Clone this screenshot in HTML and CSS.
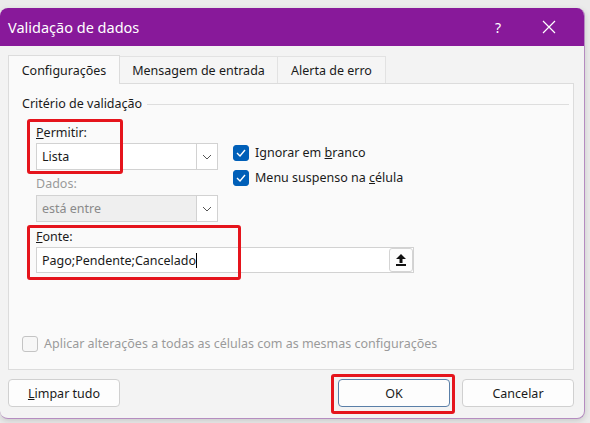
FILE: index.html
```html
<!DOCTYPE html>
<html lang="pt">
<head>
  <meta charset="UTF-8">
  <title>Validação de dados</title>
  <link rel="stylesheet" href="styles.css">
</head>
<body>
  <div class="window">
    <div class="titlebar">
      <span class="title">Validação de dados</span>
      <span class="help">?</span>
      <span class="close">
        <svg width="14" height="14" viewBox="0 0 14 14"><path d="M1 1 L13 13 M13 1 L1 13" stroke="#fff" stroke-width="1.2" fill="none"/></svg>
      </span>
    </div>

    <div class="body">
      <div class="tabs">
        <div class="tab active">Configurações</div>
        <div class="tab">Mensagem de entrada</div>
        <div class="tab">Alerta de erro</div>
      </div>

      <div class="panel">
        <div class="group-title"><span>Critério de validação</span></div>

        <div class="form">
          <div class="row">
            <div class="col-left">
              <div class="field-label"><u>P</u>ermitir:</div>
              <div class="select">
                <span class="value">Lista</span>
                <span class="drop"><svg width="10" height="6" viewBox="0 0 10 6"><path d="M1 1 L5 5 L9 1" stroke="#555" stroke-width="1" fill="none"/></svg></span>
              </div>
              <div class="field-label disabled">Dados:</div>
              <div class="select disabled">
                <span class="value">está entre</span>
                <span class="drop"><svg width="10" height="6" viewBox="0 0 10 6"><path d="M1 1 L5 5 L9 1" stroke="#555" stroke-width="1" fill="none"/></svg></span>
              </div>
            </div>
            <div class="col-checks">
              <div class="check-row">
                <span class="checkbox checked"><svg width="10" height="8" viewBox="0 0 10 8"><path d="M1 4 L4 7 L9 1" stroke="#fff" stroke-width="1.4" fill="none"/></svg></span>
                <span>Ignorar em <u>b</u>ranco</span>
              </div>
              <div class="check-row">
                <span class="checkbox checked"><svg width="10" height="8" viewBox="0 0 10 8"><path d="M1 4 L4 7 L9 1" stroke="#fff" stroke-width="1.4" fill="none"/></svg></span>
                <span>Menu suspenso na <u>c</u>élula</span>
              </div>
            </div>
          </div>

          <div class="field-label"><u>F</u>onte:</div>
          <div class="input">
            <span class="value">Pago;Pendente;Cancelado<span class="caret"></span></span>
            <span class="upload"><svg width="10" height="12" viewBox="0 0 10 12"><path d="M5 0 L10 5 L6.5 5 L6.5 9 L3.5 9 L3.5 5 L0 5 Z" fill="#111"/><rect x="0" y="10" width="10" height="2" fill="#111"/></svg></span>
          </div>
        </div>

        <div class="apply">
          <span class="checkbox"></span>
          <span>Aplicar alterações a todas as células com as mesmas configurações</span>
        </div>
      </div>

      <div class="footer">
        <div class="btn"><u>L</u>impar tudo</div>
        <div class="btn-group">
          <div class="btn primary">OK</div>
          <div class="btn">Cancelar</div>
        </div>
      </div>
    </div>

    <div class="mark mark-permitir"></div>
    <div class="mark mark-fonte"></div>
    <div class="mark mark-ok"></div>
  </div>
</body>
</html>
```

FILE: styles.css
```css
body {
  margin: 0;
  background: #ebebeb;
  font-family: "Noto Sans", "Open Sans", sans-serif;
  font-size: 12.5px;
  color: #1a1a1a;
  width: 590px;
  height: 423px;
  overflow: hidden;
}

.window {
  position: relative;
  margin-top: 8px;
  width: 584px;
  height: 410px;
  border: 1px solid #b58cc0;
  border-left: none;
  border-top: none;
  border-radius: 8px;
  overflow: hidden;
  background: #f3f3f3;
  box-shadow: 0 2px 6px rgba(0, 0, 0, 0.15);
}

.titlebar {
  height: 38px;
  background: #88199a;
  color: #fff;
  display: flex;
  align-items: center;
  padding-left: 8px;
}

.title {
  font-size: 14.5px;
  flex: 1;
}

.help {
  font-size: 14px;
  margin-right: 41px;
}

.close {
  display: flex;
  margin-right: 28px;
}

.body {
  padding: 9px 10px 0 8px;
}

.tabs {
  display: flex;
  height: 28px;
}

.tab {
  display: flex;
  align-items: center;
  justify-content: center;
  white-space: nowrap;
  background: #f5f5f5;
  border: 1px solid #e2e2e2;
  border-bottom: none;
  box-sizing: border-box;
  height: 27px;
  margin-top: 1px;
}

.tab.active {
  background: #fafafa;
  border-color: #dcdcdc;
  height: 29px;
  margin-top: 0;
  position: relative;
  z-index: 1;
  width: 112px;
}

.tab:nth-child(2) {
  width: 158px;
  border-left: none;
}

.tab:nth-child(3) {
  width: 108px;
  border-left: none;
}

.panel {
  background: #fafafa;
  border: 1px solid #dcdcdc;
  height: 287px;
  box-sizing: border-box;
  display: flex;
  flex-direction: column;
  padding-left: 13px;
}

.group-title {
  display: flex;
  align-items: center;
  margin-top: 12px;
  margin-right: 4px;
  line-height: 16px;
}

.group-title::after {
  content: "";
  flex: 1;
  border-top: 1px solid #dedede;
  margin-left: 5px;
}

.form {
  padding-left: 14px;
}

.row {
  display: flex;
}

.col-left {
  width: 182px;
}

.field-label {
  line-height: 16px;
  margin-top: 13px;
  margin-bottom: 2px;
}

.field-label.disabled {
  color: #9a9a9a;
  margin-top: 6px;
}

.select {
  height: 27px;
  box-sizing: border-box;
  border: 1px solid #d2d2d2;
  background: #fff;
  display: flex;
  align-items: center;
}

.select .value,
.input .value {
  flex: 1;
  padding-left: 5px;
}

.select .drop {
  width: 20px;
  height: 100%;
  border-left: 1px solid #d2d2d2;
  display: flex;
  align-items: center;
  justify-content: center;
  background: #fff;
}

.select.disabled {
  background: #efefef;
  color: #8a8a8a;
  margin-top: 3px;
}

.col-checks {
  margin-left: 15px;
  padding-top: 28px;
}

.check-row {
  display: flex;
  align-items: center;
  height: 25px;
  gap: 6px;
}

.checkbox {
  width: 16px;
  height: 16px;
  box-sizing: border-box;
  border-radius: 3px;
  display: flex;
  align-items: center;
  justify-content: center;
  border: 1px solid #c8c8c8;
  background: #fff;
}

.checkbox.checked {
  background: #005fb8;
  border-color: #005fb8;
}

.form > .field-label {
  margin-top: 7px;
}

.input {
  width: 378px;
  height: 26px;
  box-sizing: border-box;
  border: 1px solid #d2d2d2;
  background: #fff;
  display: flex;
  align-items: center;
  margin-top: 1px;
}

.caret {
  display: inline-block;
  width: 1px;
  height: 15px;
  background: #000;
  vertical-align: -3px;
}

.upload {
  width: 24px;
  height: 24px;
  box-sizing: border-box;
  border: 1px solid #d4d4d4;
  border-radius: 3px;
  display: flex;
  align-items: center;
  justify-content: center;
  background: #fdfdfd;
}

.apply {
  margin-top: auto;
  margin-bottom: 17px;
  display: flex;
  align-items: center;
  gap: 6px;
  color: #9a9a9a;
}

.apply .checkbox {
  border-color: #c4c4c4;
  background: #f7f7f7;
}

.footer {
  display: flex;
  justify-content: space-between;
  margin-top: 9px;
}

.btn-group {
  display: flex;
  gap: 12px;
}

.btn {
  width: 112px;
  height: 28px;
  box-sizing: border-box;
  border: 1px solid #d0d0d0;
  border-radius: 4px;
  background: #fdfdfd;
  display: flex;
  align-items: center;
  justify-content: center;
}

.btn.primary {
  border-color: #5a7fa8;
}

.mark {
  position: absolute;
  border: 3px solid #e5141c;
  border-radius: 3px;
  box-sizing: border-box;
  z-index: 2;
}

.mark-permitir {
  left: 27px;
  top: 111px;
  width: 96px;
  height: 55px;
}

.mark-fonte {
  left: 27px;
  top: 217px;
  width: 214px;
  height: 55px;
}

.mark-ok {
  left: 331px;
  top: 366px;
  width: 124px;
  height: 40px;
}
```
